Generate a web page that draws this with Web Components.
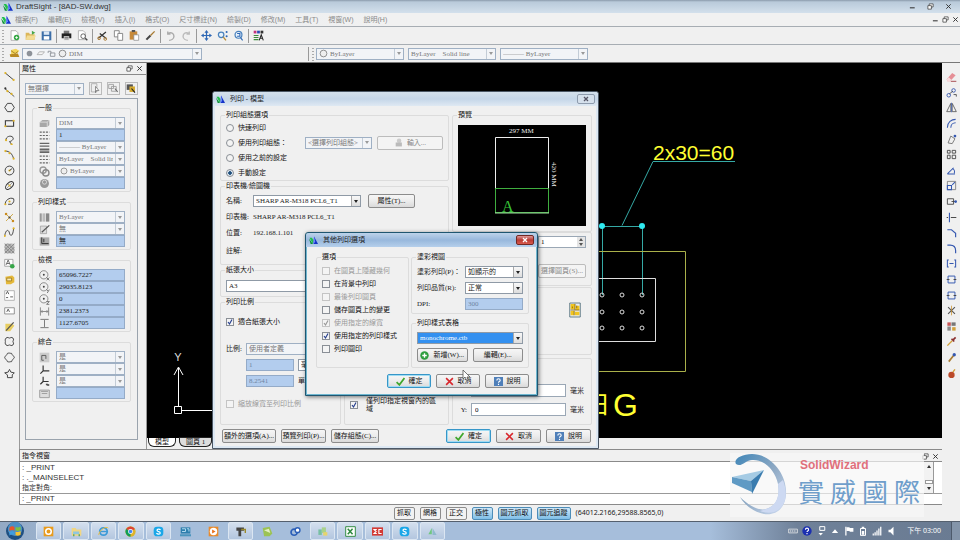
<!DOCTYPE html>
<html lang="zh-Hant">
<head>
<meta charset="utf-8">
<title>DraftSight - [8AD-SW.dwg]</title>
<style>
html,body{margin:0;height:100%}
body{overflow:hidden;background:#f0f0f0;color:#222;font:7px/10px "Liberation Sans","Noto Sans CJK TC",sans-serif;
--serif:"Liberation Serif","Noto Sans CJK TC",serif;--blue:#b3cdee;--line:#a9b4c0}
</style>
</head>
<body>
<draft-app></draft-app>
<script>
const define=(tag,css,html,setup)=>{
  const t=document.createElement('template');
  t.innerHTML=`<style>*{box-sizing:border-box}${css}</style>${html}`;
  customElements.define(tag,class extends HTMLElement{
    constructor(){super();this.attachShadow({mode:'open'})}
    connectedCallback(){
      if(this.ready)return;this.ready=true;
      this.shadowRoot.append(t.content.cloneNode(true));
      if(setup)setup(this,this.shadowRoot);
    }
  });
};
const s=(d,c='#333',w=1.3,f='none')=>`<path d="${d}" fill="${f}" stroke="${c}" stroke-width="${w}"/>`;
const f=(d,c)=>`<path d="${d}" fill="${c}"/>`;
const dot=(x,y,r=1.6,c='#e0b428')=>`<circle cx="${x}" cy="${y}" r="${r}" fill="${c}"/>`;
const ring=(x,y,r,c='#333',w=1.3,fl='none')=>`<circle cx="${x}" cy="${y}" r="${r}" fill="${fl}" stroke="${c}" stroke-width="${w}"/>`;
const ICONS={
  logo:f('M1 3h4l3 4-1 7z','#1fc04a')+f('M0 5l7 9H3z','#0b8f34')+f('M9 1l7 13H8z','#1533c8')+f('M9 1l-1 13 3-4z','#6f8cff'),
  newdoc:s('M3 1h7l3 3v11H3z','#999',1,'#fff')+dot(11,11,4,'#35a845')+s('M11 9v4M9 11h4','#fff',1.2),
  open:f('M1 4h5l1 2h7v8H1z','#dcb65a')+f('M3 8h13l-3 6H1z','#f3dc94')+f('M10 1l5 3-5 3z','#4aa64a'),
  save:f('M1 2h14v13H1z','#3c6ea8')+f('M4 2h8v5H4z','#dbe7f4')+f('M4 9h8v5H4z','#fff'),
  print:f('M4 1h8v5H4z','#777')+f('M1 5h14v7H1z','#222')+f('M4 9h8v6H4z','#ddd')+s('M5 11h6M5 13h6','#555',1),
  preview:s('M2 1h7l3 3v10H2z','#999',1,'#fff')+ring(9,9,3.4,'#555')+s('M12 12l3 3','#444',2),
  cut:s('M2 12L13 3M4 5l9 7','#333',1.8)+ring(3,12,2,'#a8762c')+ring(12,13,2,'#a8762c'),
  copy:s('M2 1h7v9H2z','#777',1.2,'#fff')+s('M7 5h7v10H7z','#777',1.2,'#fff'),
  paste:f('M1 2h11v12H1z','#c78a3a')+f('M4 0h5v3H4z','#555')+s('M7 7h7v8H7z','#888',1,'#fff'),
  brush:s('M2 14L8 8','#444',3)+s('M8 8l6-6','#a87b32',2),
  undo:s('M4 2v4h4M4 6c5-4 9-1 9 3s-4 6-7 6','#aaa',2),
  redo:s('M12 2v4H8M12 6C7 2 3 5 3 9s4 6 7 6','#bbb',2),
  pan:s('M8 3v10M3 8h10','#2d67b5',1.8)+f('M8 0l3 4H5zM8 16l3-4H5zM0 8l4-3v6zM16 8l-4-3v6z','#2d67b5'),
  zoomd:ring(6,7,4,'#4a82bd',1.8,'#e8f2fb')+s('M9 10l4 5','#b88b35',2)+dot(14,3,1.5,'#2d67b5')+dot(14,9,1.5,'#2d67b5'),
  zoomq:ring(8,7,5,'#4a82bd',1.8,'#e8f2fb')+s('M6 5h4v4H6M11 11l3 4','#2d67b5',1.6),
  props:f('M1 1h4v4H1z','#c4327c')+f('M6 1h4v4H6z','#2b48b5')+f('M11 1h4v4h-4z','#333')+s('M1 8h7M1 11h7M1 14h7','#3b8a3b',1.6)+s('M9 15l3-8 3 8M10 12h4','#222',1.5),
  layers:f('M3 3l7-2 5 3-3 4-9 1z','#f2d45a')+f('M1 9l12-1 2 5H2z','#b98a22')+s('M3 4l6 4 4-3','#8a6310',1),
  dotg:dot(8,8,5,'#8d9299'),slab:s('M2 10l4-5h9l-4 5z','#999',1.2,'#f6f6f6'),
  lockg:s('M2 7V4h5v4M6 7h8v6H6z','#8d9299',1.6),circ:ring(8,8,6,'#777',1.4,'#eee'),
  line:s('M2 3l12 10')+dot(2,3)+dot(14,13),pline:s('M1 2l14 12','#333',1.1)+dot(5,6)+dot(11,10)+dot(2,2,1.5,'#333'),
  hex:s('M5 2h6l4 6-4 6H5L1 8z'),rect:s('M2 4h12v8H2z','#333',1.5)+dot(2,12)+dot(14,4),
  arc2:s('M3 9C2 4 10 1 13 5c2 3-3 6-5 6l3 4')+dot(3,9)+dot(11,15),arc:s('M2 3c6 0 10 4 12 11')+dot(2,3)+dot(8,6)+dot(14,14),
  circle:ring(8,8,6.4)+dot(8,8)+s('M8 8l4-3'),ellipse:`<ellipse cx="8" cy="8" rx="7" ry="4" transform="rotate(-45 8 8)" fill="none" stroke="#333" stroke-width="1.4"/>`+s('M4 12l8-8M6 6l4 4','#777',1)+dot(8,8),
  earc:s('M2 12C1 7 8 1 14 4c1 3 0 6-3 8H6')+dot(8,8)+dot(2,12),
  pts:s('M2 2l12 12M13 3L3 13','#caa135',1.3)+dot(3,3,1.8,'#c98a1c')+dot(13,13,1.8,'#c98a1c')+dot(8,8,1.6,'#444'),
  spline:s('M1 13C3 2 7 4 8 9s5 5 6-7')+dot(1,13)+dot(14,2),
  hatch:f('M1 1h14v14H1z','#bbb')+s('M1 5L5 1M1 10l9-9M1 15L15 1M6 15l9-9M11 15l4-4M1 11l4 4M1 6l9 9M1 1l14 14M6 1l9 9','#777',1),
  txtg:s('M1 2h12v10H1z','#888',1,'#fff')+s('M3 10l3-7 3 7M4 8h4','#555',1.2)+dot(12,12,3.4,'#37a548'),
  block:f('M2 4l10-2 3 3v7l-5 3H3z','#e5b93c')+f('M4 6h7v4H4z','#fbecb0')+s('M4 6h7v4H4z','#8e6a12',1),
  note:s('M1 1h14v14H1z','#999',1,'#fff')+s('M3 6l2-4 2 4M9 10h4M3 11h3','#444',1.2),
  tag:s('M1 4h14v9H1z','#777',1.1,'#fff')+s('M4 10l2-4 2 4','#444',1.2),
  wand:f('M2 4h10l3 3-6 8H2z','#e8ce62')+s('M3 14L14 2','#555',1.8),
  cloud1:s('M3 3c2-2 4 0 5 0s3-2 5 0c2 2 0 4 0 5s2 3 0 5-4 0-5 0-3 2-5 0-1-4-1-5-1-3 1-5z','#444',1.4),
  cloud2:s('M5 2c3-1 3 0 6 0 1 3 3 3 4 6-1 2-3 3-4 6-3 0-3 1-6 0-1-3-3-3-4-6 1-3 3-3 4-6z','#444',1.4),
  cloud3:s('M8 2l2 4 5 1-3 3v4H5v-4L1 7l5-1z','#444',1.4),
  eraser:f('M1 12l8-9 5 3-8 9H2z','#e58f96')+f('M1 12l3-3 4 4-2 2H2z','#f7d9dc')+s('M7 15h8','#9a2f35',1.2),
  copyb:ring(4,12,2.6,'#3558b0')+ring(11,5,2.6,'#3558b0')+s('M5 10l5-4M11 11h4v3','#333',1.1),
  mirror:s('M7 2v12H1zM9 2v12h6z','#555',1.2)+s('M8 1v14','#3558b0',1),
  offset:s('M2 14C2 6 8 2 14 2M7 14c0-4 3-7 7-7','#3558b0',1.5),
  moveb:s('M3 13l4-10 6 4-4 7z','#666',1.2)+dot(13,3,2,'#3558b0'),
  grid:s('M2 2h4v4H2zM9 2h5v4H9zM2 9h4v5H2zM9 9h5v5H9z','#444',1.3),
  rot:s('M2 13h11M2 13L11 4M12 12c1-3 0-6-3-7','#3558b0',1.5),
  scale:s('M2 2h12v12H2z','#777',1.2)+s('M2 8h6v6H2zM9 7l4-4','#3558b0',1.5),
  stretch:s('M2 4h9v8H2zM8 8h7','#444',1.3)+dot(14,8,2,'#3558b0'),
  trimm:s('M5 1v14','#3558b0',1.6)+s('M7 8h8M1 8h2','#444',1.4),
  chamf:s('M2 4h6l6 5v6','#3558b0',1.7),fil:s('M2 3h4c5 0 8 3 8 8v4','#3558b0',1.7),
  join:s('M4 3H2v10h2M12 3h2v10h-2M5 8h6','#3558b0',1.5),
  brk:s('M3 3h10v10H3z','#3558b0',1.4)+s('M1 8h4M11 8h4','#444',1.4),
  explode:s('M3 3l10 10M13 3L3 13','#555',1.6)+s('M8 1v14','#c98a1c',1),
  multi:f('M2 2h5v5H2z','#c95555')+f('M8 2h6v5H8z','#777')+f('M2 8h5v6H2z','#888')+f('M9 9h5v5H9z','#d2a13a'),
  pipe:s('M2 14l7-7','#d2a13a',2)+s('M8 4l4 4M10 6l4-4','#8a2f2f',2.4),
  paint:s('M4 14l7-9','#a87b32',2.4)+dot(12,4,2.4,'#3558b0'),bomb:dot(8,10,4.6,'#bb4a2a')+s('M10 6l3-4','#d2a13a',2),
  gslab:f('M1 6l4-3h10v7l-3 3H1z','#a8a8a8')+s('M1 6h11v7M12 6l3-3','#eee',1),
  dashes:s('M1 3h14M1 8h14M1 13h14','#666',1.8).replace('/>',' stroke-dasharray="3 1.5"/>'),
  lines:s('M1 2h14M1 6h14','#666',2)+s('M1 11h14M1 15h14','#666',3),
  palette:ring(6,6,4.5,'#999',2)+ring(10,10,4.5,'#888',2),ball:dot(8,8,6.5,'#999')+ring(8,6,3,'#ddd'),
  bars:f('M1 2h3v12H1z','#999')+f('M5 2h4v12H5z','#bbb')+f('M10 2h5v12h-5z','#888'),
  edit:s('M2 3h9v11H2z','#999',1,'#ddd')+s('M4 12L15 2','#555',1.8),
  gfile:f('M1 2h14v12H1z','#aaa')+s('M4 2v9h10M7 4v5','#333',1.4),
  cx:ring(7,7,6,'#666',1)+dot(7,7,1.4,'#444')+s('M11 11l4 4M15 11l-4 4','#444',1),
  cy:ring(7,7,6,'#666',1)+dot(7,7,1.4,'#444')+s('M11 11l2 2M15 11l-3 5','#444',1),
  cz:ring(7,7,6,'#666',1)+dot(7,7,1.4,'#444')+s('M11 11h4l-4 4h4','#444',1),
  wid:s('M2 2v12M14 2v12M3 8h10M5 6L3 8l2 2M11 6l2 2-2 2','#777',1.2),
  hei:s('M2 2h12M2 14h12M8 3v10','#777',1.4),
  ucs:f('M1 1h14v14H1z','#ccc')+s('M4 12V5h6v5M4 12h3','#555',1.3),axis:s('M6 2v8h9M6 10l-4 4','#333',1.7),
  axis0:s('M6 1v7h8M6 8l-4 4M10 12h2v2M14 12v2','#333',1.7),env:s('M1 3h14v11H1zM3 5h10M4 8h8','#999',1.3,'#ddd'),
  sel:s('M2 1h8v12H2z','#999',1,'#eee')+s('M8 5l5 6H9l-1 3z','#666',1,'#fff'),
  sel2:s('M1 2h7v6H1zM5 5h7v7H5z','#999',1.2,'#eee')+s('M10 8l4 5','#666',1.5),
  sel3:f('M1 2h9v8H1z','#555')+f('M5 5h8v8H5z','#d5a92d')+s('M8 8l5 6','#222',1.6),
  ok:s('M1 9l5 5L15 2','#3ea72c',3),no:s('M2 2l12 12M14 2L2 14','#d8262c',2.8),
  help:`<rect width="16" height="16" fill="#4f7fb9"/>`+s('M5 6c0-4 6-4 6 0 0 2-3 2-3 4M8 12v2','#fff',2),
  plus:dot(8,8,7.5,'#2f9e3f')+s('M8 4v8M4 8h8','#fff',2.4),
  doc:dot(9,5,4,'#ccc')+f('M3 8h11v7H3z','#bbb'),
  sheet:s('M2 0h12v16H2z','#55707e',1,'#e9edf0')+f('M3 1h5v6H3zM9 3h4v5H9zM3 9h4v5H3zM8 10h5v4H8z','#f2c51f')+s('M8 1v7M3 8h10M7 9v5M10 3v3M5 4v2','#8a6a10',1),
  restore:s('M5 2h9v7H5z','#333',1.6,'#fff')+s('M2 6h8v8H2z','#333',1.6,'#fff'),
  x:s('M3 3l10 10M13 3L3 13','#333',2.2),min:s('M2 11h11','#333',2.4),
  orb:`<circle cx="8" cy="8" r="8" fill="#1f4f82"/><circle cx="8" cy="6" r="6.4" fill="#4d8fc4"/>`+f('M3 5q2-2 4.500-.6V7.600Q5 6.600 3 8z','#e9552a')+f('M8.500 4.400q2 1 4.500-.4v3q-2 1.600-4.500.6z','#7cc142')+f('M3 9q2-1.400 4.500-.4v3Q5 10.600 3 12z','#3f9de0')+f('M8.500 8.600q2.500 1 4.500-.6v3.400q-2 1.400-4.500.4z','#f6c231'),
  outlook:f('M1 1h14v14H1z','#e99b1c')+ring(8,8,4,'#fff',2.2),
  folder:f('M1 3h6l1 2h7v9H1z','#f0d683')+f('M3 8h9v4H3z','#8ec6df')+s('M4 15v-3M12 15v-3','#58a55d',2),
  ie:ring(8,8,5.4,'#3c9ad8',2.6)+s('M3 8h10','#3c9ad8',2)+s('M1 13C2 5 12 0 15 3','#edbd3b',1.4),
  chrome:dot(8,8,7.5,'#ddb32c')+f('M8 8L1.500 4.500A7.500 7.500 0 0 1 14.500 4.500z','#db4437')+f('M8 8L1.500 4.500A7.500 7.500 0 0 0 8 15.500z','#0f9d58')+dot(8,8,3.6,'#fff')+dot(8,8,2.6,'#4285f4'),
  skype:`<rect x="1" y="1" width="14" height="14" rx="5" fill="#1aa7e8"/>`+s('M11 5.500C8 3 4.500 5.500 6.500 7.500c1 1 4 .5 4 2.500S7 12.500 5 10.500','#fff',1.8),
  pc:f('M1 2h14v9H1z','#2d7fae')+s('M3 4h5v4H3M10 4h3v4','#bfe3f5',1.3)+f('M0 12h16v3H0z','#4a94bd'),
  media:f('M1 1h14v14H1z','#e98a2c')+dot(8,8,5.4,'#fff')+f('M6 5l5 3-5 3z','#e9701c'),
  tool:f('M2 2h11v5H9v8H5V7H2z','#444')+s('M9 5h6v5','#9a8a2c',2),
  camt:f('M1 3l10-2 4 10-4 4H3z','#9cc354')+f('M3 6l7-2 2 6z','#e3efc4'),
  tv:ring(6,9,4.500,'#2b5fb8',2.4)+ring(11,6,3.500,'#2b5fb8',2,'#fff'),
  green:f('M2 5h5v8H2z','#77bfa3')+f('M7 2h6v8H7z','#a9d28b')+f('M9 9h6v5H9z','#e7d46c'),
  excel:f('M1 1h14v14H1z','#fff')+s('M1 1h14v14H1z','#2f8a3f',1.4)+s('M4 4l7 8M11 4l-7 8','#2f8a3f',2.2),
  sw:f('M0 2h16v12H0z','#d33a35')+s('M7 5H3l3 3-3 3h4M14 5h-4v6h4','#fff',1.6),
  ds:f('M2 12L7 3v9z','#6fc780')+f('M8 3l6 10H8z','#8fb9cd'),
  kbd:s('M1 5h14v6H1z','#eee',1.2)+s('M3 8h10','#eee',1.6).replace('/>',' stroke-dasharray="2 1"/>'),
  qm:dot(8,8,7.500,'#1b2fb0')+s('M5.500 6c0-3.500 5-3.500 5 0 0 2-2.500 2-2.500 3.500M8 11v2','#fff',1.8),
  win2:s('M6 1h8v6H6z','#fff',1.6)+f('M4 11h7l-3.500 4z','#fff'),up:f('M3 11h10L8 5z','#fff'),
  flag:s('M3 1v14','#fff',2)+f('M4 2h5v1h6v6H9V8H4z','#fff'),
  batt:s('M4 4h8v11H4z','#fff',1.6)+f('M6 1h4v2H6zM6 8h4v6H6z','#fff'),
  sig:f('M1 12h2v3H1zM4 10h2v5H4zM7 7h2v8H7zM10 4h2v11h-2zM13 1h2v14h-2z','#fff'),
  vol:f('M4 6h3l5-5v14l-5-5H4z','#fff')
};
define('ui-icon',':host{display:block;flex:none;width:11px;height:11px}svg{display:block;width:100%;height:100%}',
 '<svg viewBox="0 0 16 16" aria-hidden="true"></svg>',(h,r)=>r.querySelector('svg').innerHTML=ICONS[h.getAttribute('name')]||'');

define('ui-tool',`:host{display:flex;flex:none;width:16px}button{flex:1;display:flex;align-items:center;justify-content:center;border:0;padding:0;background:none}
:host([small]) ui-icon{width:7px;height:7px}`,
 '<button type="button"></button>',(h,r)=>{const n=h.getAttribute('name'),b=r.querySelector('button');b.innerHTML=`<ui-icon name="${n}"></ui-icon>`;b.setAttribute('aria-label',n)});

define('ui-button',`:host{display:flex;min-width:0;height:14px}
button{flex:1;min-width:0;display:flex;align-items:center;justify-content:center;gap:4px;padding:0 1px;border:1px solid #8c8c8c;border-radius:2px;background:linear-gradient(#f6f6f6,#ececec 50%,#dadada);color:#111;font:7px/10px var(--serif);white-space:nowrap}
ui-icon{width:9px;height:9px}
:host([primary]) button{border-color:#3796c8;box-shadow:inset 0 0 0 1px #9fdcf3}
button:disabled{border-color:#bcbcbc;background:#f4f4f4;color:#888}
:host([sans]) button{font-family:inherit;background:#f2f2f2;padding:0 2px}
:host([on]) button{background:linear-gradient(#cfe8f8,#7fbfe8);border-color:#4d8db8}`,
 '<button type="button"><slot></slot></button>',(h,r)=>{const b=r.querySelector('button');b.disabled=h.hasAttribute('off');
  const n=h.getAttribute('icon');if(n){const i=document.createElement('ui-icon');i.setAttribute('name',n);b.prepend(i)}});

define('ui-select',`:host{display:flex;align-items:center;min-width:0;height:12px;border:1px solid #8f9aa6;background:#fff;color:#222;font:7px/10px var(--serif)}
select{appearance:none;flex:1;min-width:0;width:100%;height:10px;border:0;padding:0 2px;margin:0;background:none;color:inherit;font:inherit;opacity:1;outline:0}
i{flex:none;align-self:stretch;width:9px;border-left:1px solid #a9a9a9;background:linear-gradient(#f8f8f8,#ddd);display:flex;align-items:center;justify-content:center}
i:after{content:"";border:2px solid transparent;border-top:3px solid #222;border-bottom:0}
:host([off]){background:#f2f4f7;color:#777;border-color:#9fb0c4}:host([off]) i{background:#f2f4f7;border-color:#c3ccd6}:host([off]) i:after{border-top-color:#999}
:host([hot]) select{background:#3390f0;color:#fff}`,
 '<slot></slot><select></select><i></i>',(h,r)=>{const e=r.querySelector('select'),o=document.createElement('option');o.textContent=h.getAttribute('value');e.append(o);e.setAttribute('aria-label',h.getAttribute('name')||'');e.disabled=h.hasAttribute('off')});

define('ui-text',`:host{display:flex;min-width:0;height:12px}input{flex:1;min-width:0;width:100%;border:1px solid #9aa7b5;padding:0 2px;margin:0;background:#fff;color:#222;font:7px/10px var(--serif)}
:host([blue]) input{background:var(--blue);border-color:#94abc8}:host([off]) input{color:#6f85a2}`,
 '<input type="text">',(h,r)=>{const e=r.querySelector('input');e.value=h.getAttribute('value')||'';e.setAttribute('aria-label',h.getAttribute('name')||'');e.disabled=h.hasAttribute('off')});

const tick=(tag,type,shape)=>define(tag,`:host{display:block;min-width:0;font-family:var(--serif);color:#111}
label{display:flex;align-items:center;gap:4px}
input{appearance:none;flex:none;width:8px;height:8px;margin:0;border:1px solid #8a8f96;background:#f4f4f4;${shape}}
:host([off]){color:#999}:host([off]) input{border-color:#c4c4c4}
span{white-space:nowrap}:host([wrap]) span{white-space:normal;line-height:8px}:host([wrap]) label{gap:8px}
${type==='radio'?'input:checked{background:radial-gradient(#1f4f7c 35%,#dfe9f2 50%)}':'svg{position:absolute;inset:0;width:8px;height:8px;pointer-events:none}b{position:relative;flex:none;display:flex}'}`,
 `<label><b><input type="${type}"></b><span><slot></slot></span></label>`,(h,r)=>{const e=r.querySelector('input');e.checked=h.hasAttribute('on');e.disabled=h.hasAttribute('off');
  if(type==='checkbox'&&e.checked)e.insertAdjacentHTML('afterend',`<svg viewBox="0 0 8 8"><path d="M2 4l1.500 2L6 1.500" fill="none" stroke="${h.hasAttribute('off')?'#999':'#27408f'}" stroke-width="1.2"/></svg>`)});
tick('ui-check','checkbox','');tick('ui-radio','radio','border-radius:50%;display:block;');

define('group-box',`:host{display:block;min-width:0}fieldset{height:100%;min-width:0;margin:0;border:1px solid #dcdcdc;border-radius:2px;padding:0 5px 2px}
legend{padding:0 1px;margin-left:-1px;height:10px;color:#111;font:7px/10px var(--serif)}`,
 '<fieldset><legend></legend><slot></slot></fieldset>',(h,r)=>{const t=h.getAttribute('label'),l=r.querySelector('legend');t?l.textContent=t:l.remove()});

define('title-bar',`:host{display:flex;align-items:center;height:13px;padding:0 3px;background:linear-gradient(#8b9aab,#b9cada 15%,#d3e0ec);font:8px/12px "Liberation Sans","Noto Sans CJK TC",sans-serif;color:#333}
span{flex:1;margin-left:3px}ui-tool{width:18px}ui-icon{width:10px;height:10px}`,
 '<ui-icon name="logo"></ui-icon><span>DraftSight - [8AD-SW.dwg]</span><ui-tool small name="min"></ui-tool><ui-tool small name="restore"></ui-tool><ui-tool small name="x"></ui-tool>');

define('menu-bar',`:host{display:flex;align-items:center;height:13px;padding:0 0 0 1px;background:linear-gradient(90deg,#e4e9ee,#f1f1f1 40%)}
nav{flex:1;display:flex;gap:10px;margin-left:4px}a{color:#8a8a8a;text-decoration:none}ui-icon{width:10px;height:10px}ui-tool{width:10px}`,
 `<ui-icon name="logo"></ui-icon><nav>${['檔案(F)','編輯(E)','檢視(V)','插入(I)','格式(O)','尺寸標註(N)','繪製(D)','修改(M)','工具(T)','視窗(W)','說明(H)'].map(x=>`<a href="#">${x}</a>`).join('')}</nav><ui-tool small name="min"></ui-tool><ui-tool small name="restore"></ui-tool><ui-tool small name="x"></ui-tool>`);

const bar='i{flex:none;width:4px;height:14px;background:linear-gradient(#999,#999) center/1px 100% no-repeat}i.g{width:6px;background:radial-gradient(circle,#aaa 40%,transparent 50%) 2px 0/2px 3px repeat-y}';
define('main-tools',`:host{display:flex;align-items:center;height:18px;border-top:1px solid #a7adb3}ui-tool{height:16px}${bar}`,
 '<i class="g"></i>'+'newdoc open save | print preview | cut copy paste brush | undo redo | pan zoomd zoomq | props'.split(' ').map(n=>n==='|'?'<i></i>':`<ui-tool name="${n}"></ui-tool>`).join(''));

define('layer-tools',`:host{display:flex;align-items:center;height:19px;border-top:1px solid #a7adb3;border-bottom:1px solid #777}${bar}
ui-select ui-icon{width:9px;height:9px;margin-left:2px}.l{width:180px}.c{width:88px;margin-right:4px}.gap{flex:0 0 104px}`,
 `<i class="g"></i><ui-tool name="layers"></ui-tool><ui-select class="l" off name="圖層" value="DIM"><ui-icon name="dotg"></ui-icon><ui-icon name="slab"></ui-icon><ui-icon name="lockg"></ui-icon><ui-icon name="circ"></ui-icon></ui-select><span class="gap"></span><i></i><i class="g"></i>
 <ui-select class="c" off name="顏色" value="ByLayer"><ui-icon name="circ"></ui-icon></ui-select><ui-select class="c" off name="線型" value="ByLayer&nbsp;&nbsp;&nbsp;&nbsp;Solid line"></ui-select><ui-select class="c" off name="線寬" value="——— ByLayer"></ui-select>`);

define('tool-strip',`:host{display:block;background:#f0f0f0;padding-top:6px}div{display:grid;grid-template-rows:repeat(20,1fr);height:312px}ui-tool{width:auto}`,
 '<div role="toolbar"></div>',(h,r)=>r.querySelector('div').innerHTML=h.getAttribute('tools').split(' ').map(n=>`<ui-tool name="${n}"></ui-tool>`).join(''));

define('prop-row',':host{display:block}div{display:flex;align-items:center;gap:6px;height:12px}ui-select,ui-text{flex:1}.p{margin-left:3px;width:8px;height:8px}','<div></div>',(h,r)=>{
  const k=h.getAttribute('icon'),v=h.getAttribute('value')||'';
  r.querySelector('div').innerHTML=`<ui-icon name="${k}"></ui-icon>`+(h.hasAttribute('pick')?`<ui-select off name="${k}" value="${v}">${h.hasAttribute('ring')?'<ui-icon class="p" name="circ"></ui-icon>':''}</ui-select>`:`<ui-text blue name="${k}" value="${v}"></ui-text>`)});

define('panel-head',`:host{display:flex;align-items:center;height:12px;padding:0 2px;border-bottom:1px solid #8a8a8a;color:#111}span{flex:1}ui-tool{width:10px;height:10px}`,
 '<span><slot></slot></span><ui-tool small name="restore"></ui-tool><ui-tool small name="x"></ui-tool>');

define('property-palette',`:host{display:flex;flex-direction:column;background:#f0f0f0;border-left:1px solid #999;border-right:1px solid #999}
header{display:flex;gap:5px;padding:7px 8px 3px 5px;align-items:center}header ui-select{flex:1}header ui-tool{width:13px;height:13px;border:1px solid #bbb}
.box{flex:1;margin:0 8px 9px 5px;border:1px solid #9aa3ad;padding:4px 6px}group-box{margin-bottom:5px}.r{padding:4px 0 0 1px}`,
 `<panel-head>屬性</panel-head><header><ui-select off name="選擇" value="無選擇"></ui-select><ui-tool name="sel"></ui-tool><ui-tool name="sel2"></ui-tool><ui-tool name="sel3"></ui-tool></header>
 <div class="box">
 <group-box label="一般"><div class="r"><prop-row icon="gslab" pick value="DIM"></prop-row><prop-row icon="dashes" value="1"></prop-row><prop-row icon="lines" pick value="——— ByLayer"></prop-row><prop-row icon="dashes" pick value="ByLayer&nbsp;&nbsp;&nbsp;&nbsp;Solid line"></prop-row><prop-row icon="palette" pick ring value="ByLayer"></prop-row><prop-row icon="ball"></prop-row></div></group-box>
 <group-box label="列印樣式"><div class="r"><prop-row icon="bars" pick value="ByLayer"></prop-row><prop-row icon="edit" pick value="無"></prop-row><prop-row icon="gfile" value="無"></prop-row></div></group-box>
 <group-box label="檢視"><div class="r"><prop-row icon="cx" value="65096.7227"></prop-row><prop-row icon="cy" value="29035.8123"></prop-row><prop-row icon="cz" value="0"></prop-row><prop-row icon="wid" value="2381.2373"></prop-row><prop-row icon="hei" value="1127.6705"></prop-row></div></group-box>
 <group-box label="綜合"><div class="r"><prop-row icon="ucs" pick value="是"></prop-row><prop-row icon="axis" pick value="是"></prop-row><prop-row icon="axis0" pick value="是"></prop-row><prop-row icon="env"></prop-row></div></group-box>
 </div>`);

const holes=[455,475,495].flatMap(x=>[232,249,265].map(y=>`<circle cx="${x}" cy="${y}" r="2" stroke="#ddd"/>`)).join('');
define('cad-view',`:host{display:flex;flex-direction:column;min-width:0;background:#f0f0f0}svg{flex:1;min-height:0;width:100%;display:block;background:#000}
footer{display:flex;height:11px;gap:3px;padding-left:1px}
button{height:9px;padding:0 6px;border:1px solid #222;border-top:0;border-radius:0 0 6px 6px;background:#fff;color:#111;font:7px/8px var(--serif)}button+button{background:#ddd;box-shadow:0 -1px #222}`,
 `<svg role="img" aria-label="drawing" fill="none"><g stroke="#fff"><path d="M31.500 343V305M27 312l4.500-8 4.500 8M27.500 343.500h7v7h-7zM35 347.500h60"/></g><text x="31" y="298" text-anchor="middle" fill="#ddd" font-size="11" font-family="Liberation Sans">Y</text>
 <g fill="#ffff32" font-family="Liberation Sans"><text x="506" y="97" font-size="21">2x30=60</text><text x="466" y="353" font-size="32">G</text><text x="439" y="350" font-size="24" font-family="Noto Sans CJK TC">日</text></g>
 <g stroke="#35a9a5"><path d="M588 98.500h-82l-31 64M430 163.500h65M455.500 163v69M495.500 163v69"/></g><circle cx="455" cy="163" r="3" fill="#2fe9f0"/><circle cx="495" cy="163" r="3" fill="#2fe9f0"/>
 <path d="M440 188.500h98.500v120H440" stroke="#a9b04a"/><path d="M440 215.500h68.500v63H440" stroke="#ddd"/>${holes}</svg>
 <footer><button type="button">模型</button><button type="button">圖頁 1</button></footer>`);

define('app-window',`:host{position:absolute;display:flex;flex-direction:column;border:1px solid #4c5866;border-radius:3px 3px 0 0;background:#f0f0f0;padding:0 4px 3px;box-shadow:inset 0 0 0 2px #dde8f3;font-family:var(--serif)}
header{display:flex;align-items:center;gap:5px;height:14px;margin:0 -4px;padding:0 3px;background:linear-gradient(#d4e0ec,#c5d6e8 50%,#dfe9f3);border-radius:3px 3px 0 0;font:7px/12px "Noto Sans","Noto Sans CJK TC",sans-serif}
header span{flex:1}header ui-icon{width:9px;height:9px}button{width:18px;height:10px;padding:0;border:1px solid #8e9cae;border-radius:2px;background:#d5e0ec;display:flex;align-items:center;justify-content:center}button svg{width:6px;height:6px}path{stroke:#556}
:host([active]){border:1px solid #1f5670;box-shadow:inset 0 0 0 1px #6fb6cf,1px 1px 4px #0008}:host([active]) header{background:linear-gradient(#bdd3ea,#98b8dc 50%,#b5cfeb)}
:host([active]) button{background:linear-gradient(#d99,#b93a32 50%,#d9594c);border-color:#732823}:host([active]) path{stroke:#fff}`,
 '<header><ui-icon name="logo"></ui-icon><span></span><button type="button" aria-label="關閉"><svg viewBox="0 0 6 6"><path d="M1 1l4 4M5 1L1 5" stroke-width="1.3"/></svg></button></header><slot></slot>',(h,r)=>r.querySelector('span').textContent=h.getAttribute('caption'));

define('print-dialog',`:host{display:contents}app-window{left:212px;top:91px;width:387px;height:358px}
.main{flex:1;display:grid;grid-template-columns:229px 1fr;gap:3px;padding:4px 2px 4px 3px;min-height:0}
.main>div{display:flex;flex-direction:column;min-width:0}.row{display:flex;align-items:center;height:16px}.row>span{flex:none;width:27px;white-space:nowrap}
.g1{height:71px}.g2{height:84px}.g2 .row:last-child{height:20px}.g3{height:32px}.low{flex:1;display:flex;gap:3px}.g4{width:121px}.g5{flex:1}.g6{height:122px}
.q{height:15px}.q ui-radio{flex:1}.w1{width:67px;margin-right:5px}.w2{width:66px}.n{width:108px;margin-right:7px}.m{width:47px}
.g4 .row>span{width:20px}.g4 ui-text{width:48px;margin-right:4px}.g4 ui-select{flex:1}
.ck{height:30px;display:flex;align-items:center}.g5 .ck{padding-right:4px}
.pv{display:block;width:100%;height:101px;background:#000;margin-top:5px}
.g7{height:54px}.g8{height:68px;margin-top:1px}.g9{flex:1;margin-top:3px}.end{display:flex;justify-content:flex-end;align-items:center}
.foot{display:flex;gap:5px;height:16px;padding:0 3px 0 5px}.foot ui-button{width:45px}.foot .a{width:54px}.foot .c{width:48px;margin-right:auto}
.spin{display:flex;width:48px;position:relative}.spin input{width:100%;height:12px;border:1px solid #9aa7b5;padding:0 2px;font:7px/10px var(--serif);appearance:textfield}.spin svg{position:absolute;right:1px;top:1px;width:8px;height:10px;background:#e4e4e4}
.xy{display:flex;align-items:center;gap:4px;height:19px;padding-right:2px;white-space:nowrap}.xy>span{flex:none}.xy label{display:flex;flex:1;min-width:0;gap:4px;align-items:center}.xy input{flex:1;min-width:0;height:13px;border:1px solid #9aa7b5;padding:0 3px;font:7px/10px var(--serif)}.xy label>span{width:9px;text-align:right}`,
 `<app-window caption="列印 - 模型"><div class="main"><div>
 <group-box class="g1" label="列印組態選項"><div class="row q"><ui-radio>快速列印</ui-radio></div><div class="row q"><ui-radio>使用列印組態：</ui-radio><ui-select class="w1" off name="列印組態" value="&lt;選擇列印組態&gt;"></ui-select><ui-button class="w2" off icon="doc">輸入...</ui-button></div><div class="row q"><ui-radio>使用之前的設定</ui-radio></div><div class="row q"><ui-radio on>手動設定</ui-radio></div></group-box>
 <group-box class="g2" label="印表機/繪圖機"><div style="height:2px"></div><div class="row"><span>名稱:</span><ui-select class="n" name="名稱" value="SHARP AR-M318 PCL6_T1"></ui-select><ui-button class="m">屬性(T)...</ui-button></div><div class="row"><span>印表機:</span>SHARP AR-M318 PCL6_T1</div><div class="row"><span>位置:</span>192.168.1.101</div><div class="row"><span>註解:</span></div></group-box>
 <group-box class="g3" label="紙張大小"><div style="height:5px"></div><ui-select name="紙張大小" value="A3"></ui-select></group-box>
 <div class="low"><group-box class="g4" label="列印比例"><div class="ck"><ui-check on>適合紙張大小</ui-check></div><div style="height:4px"></div><div class="row"><span>比例:</span><ui-select off name="比例" value="使用者定義"></ui-select></div><div class="row"><span></span><ui-text blue off name="毫米" value="1"></ui-text><ui-select name="單位" value="毫米"></ui-select></div><div class="row"><span></span><ui-text blue off name="圖面單位" value="8.2541"></ui-text>單位</div><div class="ck"><ui-check off>縮放線寬至列印比例</ui-check></div></group-box>
 <group-box class="g5"><div style="height:92px"></div><div class="ck"><ui-check on wrap>僅列印指定視窗內的區域</ui-check></div></group-box></div></div>
 <div><group-box class="g6" label="預覽"><svg class="pv" viewBox="0 0 128 101" preserveAspectRatio="xMidYMid meet" role="img" aria-label="預覽"><g fill="#eee" font-family="Liberation Serif" font-size="7"><text x="51" y="8">297 MM</text><text transform="translate(94 37) rotate(90)">420 MM</text></g><path d="M37.500 88V12.500h53V88" fill="none" stroke="#eee"/><path d="M37.500 63.500h53v24h-53z" fill="none" stroke="#3fae3f"/><path d="M37 88h54" stroke="#9fe09f"/><text x="44" y="87" font-family="Liberation Serif" font-size="16" fill="#37c337">A</text></svg></group-box>
 <group-box class="g7"><div class="end" style="height:18px"><span class="spin"><input type="number" value="1" aria-label="份數"><svg viewBox="0 0 8 10"><path d="M2 4l2-3 2 3zM2 6l2 3 2-3z" fill="#555"/></svg></span></div><div class="end" style="height:12px"></div><div class="end" style="height:16px"><ui-button off style="width:48px">選擇圖頁(S)...</ui-button></div></group-box>
 <group-box class="g8"><div class="end" style="height:44px;padding-right:4px"><ui-icon name="sheet" style="width:14px;height:16px"></ui-icon></div></group-box>
 <group-box class="g9"><div style="height:22px"></div><div class="xy"><label><span></span><input aria-label="X" value=""></label><span>毫米</span></div><div class="xy"><label><span>Y:</span><input value="0"></label><span>毫米</span></div></group-box></div></div>
 <div class="foot"><ui-button class="a">額外的選項(A)...</ui-button><ui-button>預覽列印(P)...</ui-button><ui-button class="c">儲存組態(C)...</ui-button><ui-button primary icon="ok">確定</ui-button><ui-button icon="no">取消</ui-button><ui-button icon="help">說明</ui-button></div></app-window>`);

define('options-dialog',`:host{display:contents}app-window{left:305px;top:232px;width:233px;height:164px}
.m{flex:1;display:grid;grid-template-columns:93px 1fr;gap:2px;padding:5px 4px 4px 6px;min-height:0}.r{display:flex;flex-direction:column}.a{height:62px;margin-bottom:4px}.b{flex:1}
ui-check{height:13px;padding-top:1px}.row{display:flex;align-items:center;height:16px}.row>span{width:48px;flex:none;white-space:nowrap}.row>*{flex:1}
.bt{display:flex;gap:5px;margin-top:4px}.bt ui-button{flex:1}.f{display:flex;justify-content:flex-end;gap:5px;padding:2px 4px 4px}.f ui-button{width:44px}`,
 `<app-window active caption="其他列印選項"><div class="m"><group-box label="選項"><div style="height:3px"></div><ui-check off>在圖頁上隱藏幾何</ui-check><ui-check>在背景中列印</ui-check><ui-check off>最後列印圖頁</ui-check><ui-check>儲存圖頁上的變更</ui-check><ui-check off on>使用指定的線寬</ui-check><ui-check on>使用指定的列印樣式</ui-check><ui-check>列印圖印</ui-check></group-box>
 <div class="r"><group-box class="a" label="塗彩視圖"><div style="height:2px"></div><div class="row"><span>塗彩列印(P)：</span><ui-select name="塗彩列印" value="如顯示的"></ui-select></div><div class="row"><span>列印品質(R):</span><ui-select name="列印品質" value="正常"></ui-select></div><div class="row"><span>DPI:</span><ui-text blue off name="DPI" value="300"></ui-text></div></group-box>
 <group-box class="b" label="列印樣式表格"><div style="height:4px"></div><ui-select hot name="列印樣式表格" value="monochrome.ctb"></ui-select><div class="bt"><ui-button icon="plus">新增(W)...</ui-button><ui-button>編輯(E)...</ui-button></div></group-box></div></div>
 <div class="f"><ui-button primary icon="ok">確定</ui-button><ui-button icon="no">取消</ui-button><ui-button icon="help">說明</ui-button></div></app-window>`);

define('command-window',`:host{display:flex;flex-direction:column;border:1px solid #8a8a8a;border-right:0;background:#f0f0f0;color:#333}
.log{flex:1;display:flex;background:#fff;border-bottom:1px solid #999}.log div{flex:1;padding:1px 2px 0;font-size:8px}p{margin:0}aside{width:10px;margin-right:8px;display:flex;flex-direction:column;justify-content:space-between;align-items:center;background:#f2f2f2;padding:3px 0;border-right:1px solid #999}
aside:before,aside:after{content:"";border:2px solid transparent}aside:before{border-bottom:3px solid #333;border-top:0}aside:after{border-top:3px solid #333;border-bottom:0}b{width:8px;height:4px;border:1px solid #999;background:#fff;margin-top:8px}
label{display:flex;height:10px;padding-left:2px;background:#fff;font-size:8px}input{flex:1;border:0;padding:0 0 0 2px;font:inherit;color:inherit;background:none}panel-head{margin-top:1px}p:nth-child(3){font-size:7px}`,
 '<panel-head>指令視窗</panel-head><div class="log"><div><p>: _PRINT</p><p>: ._MAINSELECT</p><p>指定對角:</p></div><aside><b></b></aside></div><label>:<input value="_PRINT"></label>');

define('status-bar',`:host{display:flex;align-items:center;justify-content:center;gap:5px;height:16px;margin-left:97px}ui-button{height:13px;min-width:21px}span{font-family:"Noto Sans",sans-serif}`,
 `${['抓取','網格','正交'].map(t=>`<ui-button sans>${t}</ui-button>`).join('')}${['極性','圖元抓取','圖元追蹤'].map(t=>`<ui-button sans on>${t}</ui-button>`).join('')}<span>(64012.2166,29588.8565,0)</span>`);

define('task-bar',`:host{display:flex;align-items:center;height:19px;border-top:1px solid #55606e;background:linear-gradient(90deg,#93a9c4,#a6bedb 12%,#a6bedb 74%,#6f8199 83%,#6a7b92)}
.orb{width:35px;padding:0 0 0 5px;border:0;background:none}.orb ui-icon{width:20px;height:18px}
nav{display:grid;grid-template-columns:repeat(15,1fr);width:411px;height:18px}nav button{display:flex;align-items:center;justify-content:center;padding:0;margin:0 1px;border:0;background:none}nav button.o{border:1px solid #dbe6f2;border-radius:2px;background:linear-gradient(#d3dfee,#b3c6df)}
nav ui-icon{width:11px;height:11px}.tray{margin-left:auto;display:flex;align-items:center;gap:4px;color:#fff}.tray ui-icon{width:10px;height:10px}time{margin:0 6px 0 7px;font:7px/10px "Noto Sans","Noto Sans CJK TC",sans-serif}.sd{width:9px;height:18px;background:#8495aa;border-left:1px solid #4d5a6b}`,
 `<button class="orb" aria-label="開始"><ui-icon name="orb"></ui-icon></button><nav>${'outlook* folder* ie* chrome* skype* pc media tool* camt tv green* excel* sw* skype* ds*'.split(' ').map(n=>`<button type="button" class="${n.endsWith('*')?'o':''}" aria-label="${n.replace('*','')}"><ui-icon name="${n.replace('*','')}"></ui-icon></button>`).join('')}</nav>
 <div class="tray">${'kbd qm win2 up flag batt sig vol'.split(' ').map(n=>`<ui-icon name="${n}"></ui-icon>`).join('')}<time>下午 03:00</time><div class="sd"></div></div>`);

define('brand-mark',`:host{position:absolute;right:36px;bottom:23px;width:194px;height:64px;background:#f6f6f6b0;display:flex;gap:10px}
svg{flex:none;width:58px;height:64px}div{flex:1;padding-top:5px}b{display:block;font:bold 12px/14px "Liberation Sans",sans-serif;color:#e0707c;padding-left:2px}
p{display:flex;justify-content:space-between;margin:4px 4px 0 0;font:26px/30px "Noto Sans CJK TC",sans-serif;color:#6f9ecb}`,
 `<svg viewBox="0 0 58 64" aria-hidden="true"><defs><linearGradient id="a" x1="0" y1="0" x2="1" y2="1"><stop stop-color="#3f86b8"/><stop offset=".5" stop-color="#8ea9c4"/><stop offset="1" stop-color="#cfdcf2"/></linearGradient></defs>
 <path d="M6 11C3 6 12 1 22 1c18 0 33 18 34 36 1 17-9 26-22 24C23 59 14 51 10 44c8 8 18 14 26 12 11-3 14-13 12-25C45 16 33 6 22 7c-6 0-11 8-16 4z" fill="url(#a)"/><path d="M36 56c10-3 14-12 12-25l5-4c6 16 2 28-9 32-4 1-9 1-14-1z" fill="#cdd9f2"/>
 <path d="M2 24l32-7-13 11z" fill="#a5cbe4"/><path d="M2 24l19 4 1 11L2 30z" fill="#5f9ac4"/><path d="M21 28l13-11-12 24z" fill="#3a7caf"/></svg><div><b>SolidWizard</b><p><span>實</span><span>威</span><span>國</span><span>際</span></p></div>`);

define('draft-app',`:host{position:relative;display:flex;flex-direction:column;height:100vh;background:#f0f0f0}
.work{flex:1;min-height:0;display:grid;grid-template:1fr 56px / 19px 128px 1fr 18px}.side{grid-row:1/3}command-window{grid-column:2/4;grid-row:2}.r{grid-column:4}.cur{position:absolute;left:462px;top:369px;width:9px;height:13px}`,
 `<title-bar></title-bar><menu-bar></menu-bar><main-tools></main-tools><layer-tools></layer-tools>
 <div class="work"><tool-strip class="side" tools="line pline hex rect arc2 arc circle ellipse earc pts spline hatch txtg block note tag wand cloud1 cloud2 cloud3"></tool-strip><property-palette></property-palette><cad-view></cad-view><tool-strip class="side r" tools="eraser copyb mirror offset moveb grid rot scale stretch trimm chamf fil join brk brk explode multi pipe paint bomb"></tool-strip><command-window></command-window></div>
 <status-bar></status-bar><task-bar></task-bar><print-dialog></print-dialog><options-dialog></options-dialog><brand-mark></brand-mark>
 <svg class="cur" viewBox="0 0 9 13" aria-hidden="true"><path d="M1 1v9l2-2 2 4 1-1-1-3h3z" fill="#fff" stroke="#555" stroke-width=".8"/></svg>`);
</script>
</body>
</html>
